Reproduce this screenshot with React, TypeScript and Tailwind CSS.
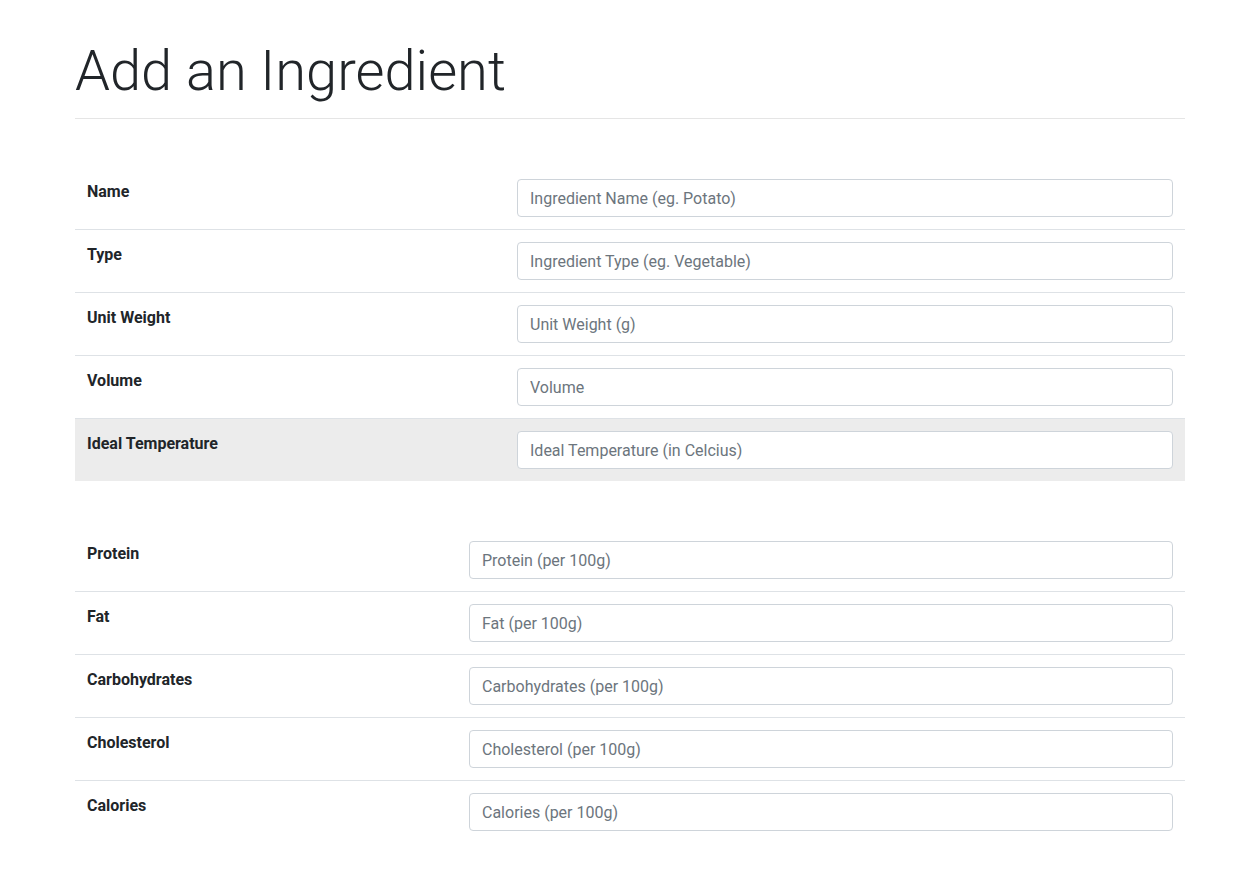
import React from "react";

type Row = { label: string; placeholder: string };

const t1: Row[] = [
  { label: "Name", placeholder: "Ingredient Name (eg. Potato)" },
  { label: "Type", placeholder: "Ingredient Type (eg. Vegetable)" },
  { label: "Unit Weight", placeholder: "Unit Weight (g)" },
  { label: "Volume", placeholder: "Volume" },
  { label: "Ideal Temperature", placeholder: "Ideal Temperature (in Celcius)" },
];

const t2: Row[] = [
  { label: "Protein", placeholder: "Protein (per 100g)" },
  { label: "Fat", placeholder: "Fat (per 100g)" },
  { label: "Carbohydrates", placeholder: "Carbohydrates (per 100g)" },
  { label: "Cholesterol", placeholder: "Cholesterol (per 100g)" },
  { label: "Calories", placeholder: "Calories (per 100g)" },
];

function Table({ rows, labelW, hoverIdx }: { rows: Row[]; labelW: string; hoverIdx?: number }) {
  return (
    <div className="flex flex-col">
      {rows.map((r, i) => (
        <div
          key={r.label}
          className={
            "flex " +
            (i > 0 ? "border-t border-[#dee2e6] " : "") +
            (i === hoverIdx ? "bg-[#ececec]" : "")
          }
        >
          <div className={labelW + " px-3 pt-[13px] pb-[11px] font-bold text-[16px] leading-6 text-[#212529]"}>{r.label}</div>
          <div className="flex-1 p-3">
            <input
              type="text"
              placeholder={r.placeholder}
              className="block w-full h-[38px] px-3 py-[6px] text-[16px] leading-6 text-[#495057] bg-white border border-[#ced4da] rounded-[4px] placeholder:text-[#6c757d] outline-none"
            />
          </div>
        </div>
      ))}
    </div>
  );
}

export default function App() {
  return (
    <div
      className="min-h-[895px] bg-white pl-[75px] pb-[52px]"
      style={{ fontFamily: "Roboto, 'Liberation Sans', sans-serif" }}
    >
      <div className="w-[1110px]">
        <h1 className="pt-[38px] text-[56px] leading-[67px] font-light text-[#212529]">Add an Ingredient</h1>
        <div className="mt-[13px] h-px bg-[#e5e5e5]" />
        <div className="mt-[48px]">
          <Table rows={t1} labelW="w-[430px]" hoverIdx={4} />
        </div>
        <div className="mt-[48px]">
          <Table rows={t2} labelW="w-[382px]" />
        </div>
      </div>
    </div>
  );
}
